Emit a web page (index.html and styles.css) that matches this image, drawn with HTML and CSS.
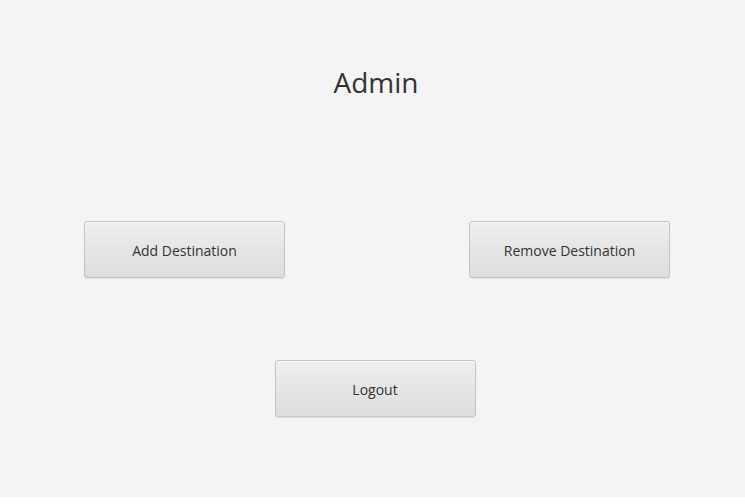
FILE: index.html
```html
<!DOCTYPE html>
<html>
<head>
<meta charset="utf-8">
<link rel="stylesheet" href="styles.css">
</head>
<body>
<div class="app">
  <h1 class="title">Admin</h1>
  <div class="row">
    <button class="btn">Add Destination</button>
    <button class="btn">Remove Destination</button>
  </div>
  <div class="row-center">
    <button class="btn">Logout</button>
  </div>
</div>
</body>
</html>
```
FILE: styles.css
```css
html, body {
  margin: 0;
  padding: 0;
  background: #ffffff;
}
.app {
  height: 497px;
  background: #f4f4f4;
  display: flex;
  flex-direction: column;
  font-family: "Segoe UI", "Open Sans", "Noto Sans", sans-serif;
  color: #333333;
}
.title {
  margin: 64px 0 0 0;
  padding-left: 7px;
  font-size: 28px;
  line-height: 36px;
  font-weight: 400;
  text-align: center;
  color: #333333;
}
.row {
  display: flex;
  justify-content: space-between;
  padding: 0 75px 0 84px;
  margin-top: 121px;
}
.row-center {
  display: flex;
  justify-content: center;
  padding-left: 5px;
  margin-top: 82px;
}
.btn {
  width: 201px;
  height: 57px;
  box-sizing: border-box;
  border: 1px solid #c4c4c4;
  border-radius: 3px;
  background: linear-gradient(to bottom, #efefef 0%, #e5e5e5 50%, #dddddd 100%);
  box-shadow: inset 0 1px 0 #f8f8f8, 0 1px 1px rgba(0,0,0,0.08);
  font-family: "Segoe UI", "Open Sans", "Noto Sans", sans-serif;
  font-size: 14px;
  color: #333333;
  padding: 2px 0 0 0;
}
```
